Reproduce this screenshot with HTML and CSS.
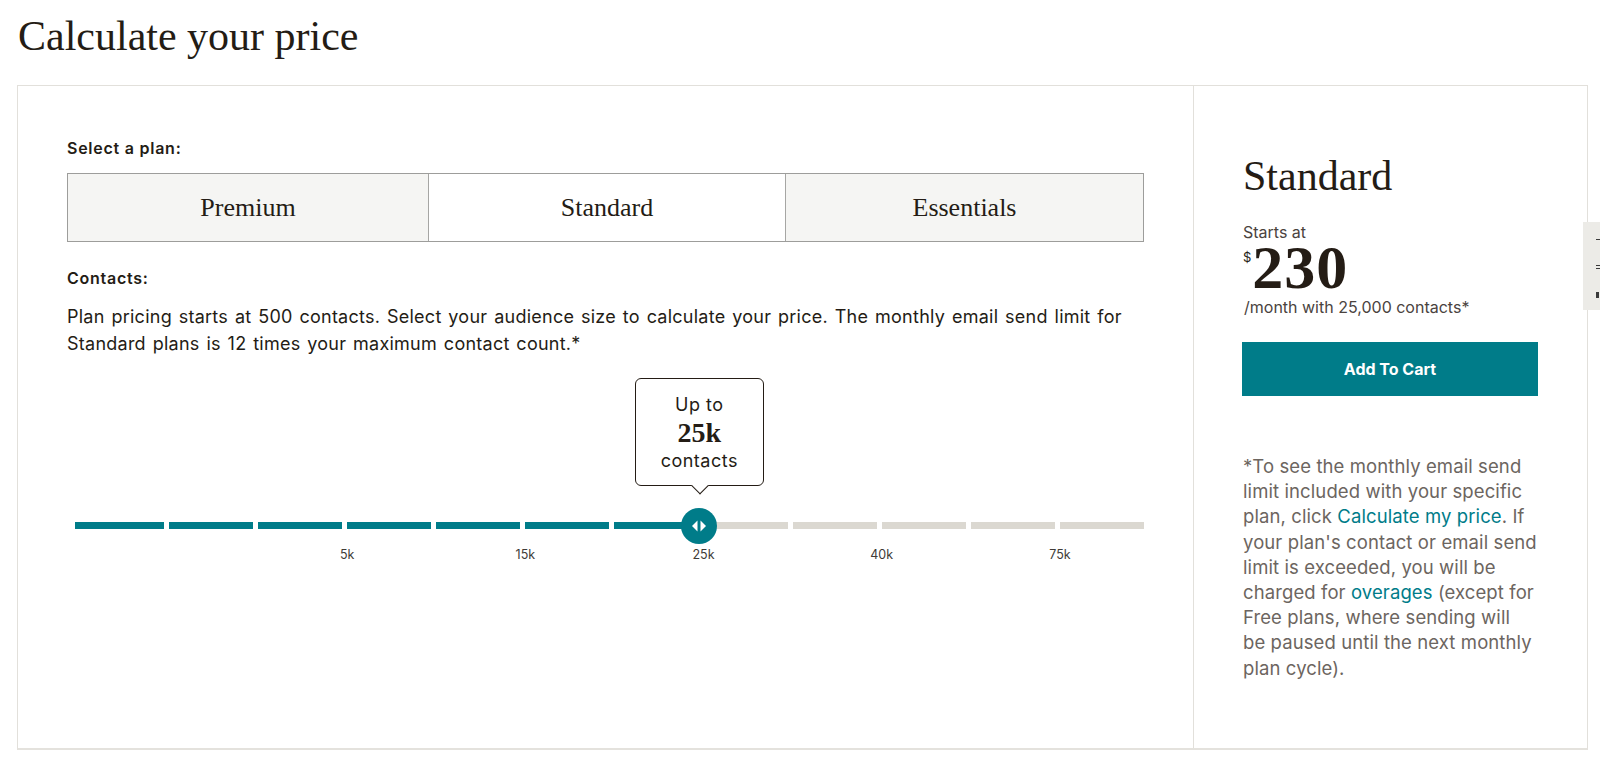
FILE: index.html
```html
<!DOCTYPE html>
<html lang="en">
<head>
<meta charset="utf-8">
<title>Calculate your price</title>
<link rel="stylesheet" href="styles.css">
</head>
<body>
  <h1 class="page-title">Calculate your price</h1>

  <section class="calc-card">
    <div class="calc-main">
      <div class="field-label">Select a plan:</div>
      <div class="plan-picker">
        <button class="plan-option">Premium</button>
        <button class="plan-option is-active">Standard</button>
        <button class="plan-option">Essentials</button>
      </div>

      <div class="field-label contacts-label">Contacts:</div>
      <p class="contacts-desc">Plan pricing starts at 500 contacts. Select your audience size to calculate your price. The monthly email send limit for Standard plans is 12 times your maximum contact count.*</p>

      <div class="slider">
        <div class="track-wrap">
          <div class="track">
            <span class="seg on"></span><span class="seg on"></span><span class="seg on"></span><span class="seg on"></span><span class="seg on"></span><span class="seg on"></span><span class="seg on"></span><span class="seg"></span><span class="seg"></span><span class="seg"></span><span class="seg"></span><span class="seg"></span>
          </div>
          <div class="tooltip" style="left: 58.4%">
            <span class="tip-line">Up to</span>
            <span class="tip-value">25k</span>
            <span class="tip-line">contacts</span>
          </div>
          <div class="thumb" style="left: 58.4%">
            <svg width="16" height="12" viewBox="0 0 16 12" aria-hidden="true"><polygon points="6.5,0.5 6.5,11.5 1,6" fill="#fff"/><polygon points="9.5,0.5 9.5,11.5 15,6" fill="#fff"/></svg>
          </div>
        </div>
        <div class="ticks">
          <span class="tick t1">5k</span>
          <span class="tick t2">15k</span>
          <span class="tick t3">25k</span>
          <span class="tick t4">40k</span>
          <span class="tick t5">75k</span>
        </div>
      </div>
    </div>

    <aside class="calc-summary">
      <h2 class="summary-plan">Standard</h2>
      <div class="starts-at">Starts at</div>
      <div class="price"><span class="currency">$</span><span class="amount">230</span></div>
      <div class="per-month">/month with 25,000 contacts*</div>
      <button class="cart-btn">Add To Cart</button>
      <p class="footnote">*To see the monthly email send limit included with your specific plan, click <a href="#">Calculate my price</a>. If your plan's contact or email send limit is exceeded, you will be charged for <a href="#">overages</a> (except for Free plans, where sending will <span class="nowrap">be paused</span> until the next monthly plan cycle).</p>
    </aside>
  </section>

  <div class="side-tab" aria-hidden="true">
    <span class="mk mk1"></span>
    <span class="mk mk2"></span>
    <span class="mk mk3"></span>
    <span class="mk mk4"></span>
  </div>
</body>
</html>
```

FILE: styles.css
```css
* { box-sizing: border-box; }

html, body {
  margin: 0;
  padding: 0;
  background: #fff;
}

body {
  font-family: "Inter", "Liberation Sans", sans-serif;
  color: #241c15;
  width: 1600px;
  height: 780px;
  overflow: hidden;
}

.page-title {
  margin: 11px 0 0 18px;
  font-family: "Liberation Serif", serif;
  font-weight: 400;
  font-size: 42px;
  line-height: 50px;
  color: #241c15;
}

.calc-card {
  margin: 24px 0 0 17px;
  width: 1571px;
  height: 665px;
  border: 1px solid #e2e0db;
  border-bottom: 2px solid #e4e2dd;
  display: grid;
  grid-template-columns: 1175px 1fr;
}

/* ---------- left column ---------- */
.calc-main {
  padding: 52px 49px 0 49px;
}

.field-label {
  font-size: 16px;
  font-weight: 600;
  line-height: 20px;
  letter-spacing: 0.75px;
  color: #241c15;
}

.plan-picker {
  margin-top: 15px;
  height: 69px;
  border: 1px solid #9d9d9b;
  display: grid;
  grid-template-columns: 360px 357px 1fr;
}

.plan-option {
  margin: 0;
  padding: 0;
  border: 0;
  border-left: 1px solid #a6a6a4;
  background: #f5f5f3;
  font-family: "Liberation Serif", serif;
  font-size: 26px;
  color: #241c15;
  cursor: pointer;
}
.plan-option:first-child { border-left: 0; }
.plan-option.is-active { background: #fff; }

.contacts-label { margin-top: 26px; }

.contacts-desc {
  margin: 15px 0 0;
  font-size: 18px;
  line-height: 27px;
  letter-spacing: 0.25px;
  word-spacing: 1.5px;
  color: #241c15;
}

/* ---------- slider ---------- */
.slider {
  padding-left: 8px;
}

.track-wrap {
  position: relative;
  padding-top: 165px;
}

.track {
  display: grid;
  grid-template-columns: 89px repeat(11, 1fr);
  column-gap: 5px;
  height: 7px;
}

.seg { background: #dbd8d1; }
.seg.on { background: #007c89; }

.thumb {
  position: absolute;
  top: 150.5px;
  width: 36px;
  height: 36px;
  margin-left: -18px;
  border-radius: 50%;
  background: #007c89;
  display: flex;
  align-items: center;
  justify-content: center;
}

.tooltip {
  position: absolute;
  top: 21px;
  width: 129px;
  height: 108px;
  margin-left: -64.5px;
  padding-top: 11.5px;
  border: 1.5px solid #241c15;
  border-radius: 6px;
  background: #fff;
  display: flex;
  flex-direction: column;
  align-items: center;
}

.tooltip::after {
  content: "";
  position: absolute;
  left: 50%;
  bottom: -6.5px;
  width: 11px;
  height: 11px;
  margin-left: -5.5px;
  background: #fff;
  border-right: 1.5px solid #241c15;
  border-bottom: 1.5px solid #241c15;
  transform: rotate(45deg);
}

.tip-line {
  font-size: 18px;
  line-height: 28px;
  letter-spacing: 0.5px;
  color: #241c15;
}

.tip-value {
  font-family: "Liberation Serif", serif;
  font-weight: 700;
  font-size: 28px;
  line-height: 28px;
  color: #241c15;
}

.ticks {
  margin-top: 18px;
  display: grid;
  grid-template-columns: 89px repeat(11, 1fr);
  column-gap: 5px;
}

.tick {
  grid-row: 1;
  padding-left: 5px;
  text-align: center;
  font-size: 12.5px;
  line-height: 16px;
  color: #403b37;
}
.t1 { grid-column: 3 / span 2; }
.t2 { grid-column: 5 / span 2; }
.t3 { grid-column: 7 / span 2; }
.t4 { grid-column: 9 / span 2; }
.t5 { grid-column: 11 / span 2; }

/* ---------- right column ---------- */
.calc-summary {
  border-left: 1px solid #e2e0db;
  padding: 65px 46px 0 49px;
}

.summary-plan {
  margin: 0;
  font-family: "Liberation Serif", serif;
  font-weight: 400;
  font-size: 42px;
  line-height: 50px;
  color: #241c15;
}

.starts-at {
  margin-top: 21px;
  font-size: 16px;
  line-height: 20px;
  color: #4a433e;
}

.price {
  display: flex;
  align-items: flex-start;
  height: 50px;
}

.currency {
  margin-top: 9px;
  font-size: 13px;
  line-height: 13px;
  color: #241c15;
}

.amount {
  margin-left: 1px;
  font-family: "Liberation Serif", serif;
  font-weight: 700;
  font-size: 62px;
  line-height: 50px;
  letter-spacing: 1px;
  color: #241c15;
}

.per-month {
  margin-top: 5px;
  padding-left: 1px;
  font-size: 16px;
  line-height: 20px;
  color: #4a433e;
}

.cart-btn {
  display: block;
  margin: 25px 0 0 -1px;
  width: 296px;
  height: 54px;
  border: 0;
  background: #007c89;
  color: #fff;
  font-family: "Inter", "Liberation Sans", sans-serif;
  font-weight: 700;
  font-size: 16px;
  cursor: pointer;
}

.footnote {
  margin: 58px 0 0;
  font-size: 18.5px;
  line-height: 25.2px;
  letter-spacing: 0.1px;
  color: #6c6560;
}

.footnote a {
  color: #007c89;
  text-decoration: none;
}

.nowrap { white-space: nowrap; }

/* ---------- side feedback tab ---------- */
.side-tab {
  position: fixed;
  right: 0;
  top: 222px;
  width: 17px;
  height: 88px;
  background: #ecebe7;
}

.mk {
  position: absolute;
  background: #3a3a3a;
}
.mk1 { left: 13px; top: 17px; width: 4px; height: 1px; }
.mk2 { left: 13px; top: 43px; width: 4px; height: 1px; }
.mk3 { left: 13px; top: 46px; width: 4px; height: 1px; }
.mk4 { left: 13px; top: 70px; width: 3px; height: 6px; }
```
